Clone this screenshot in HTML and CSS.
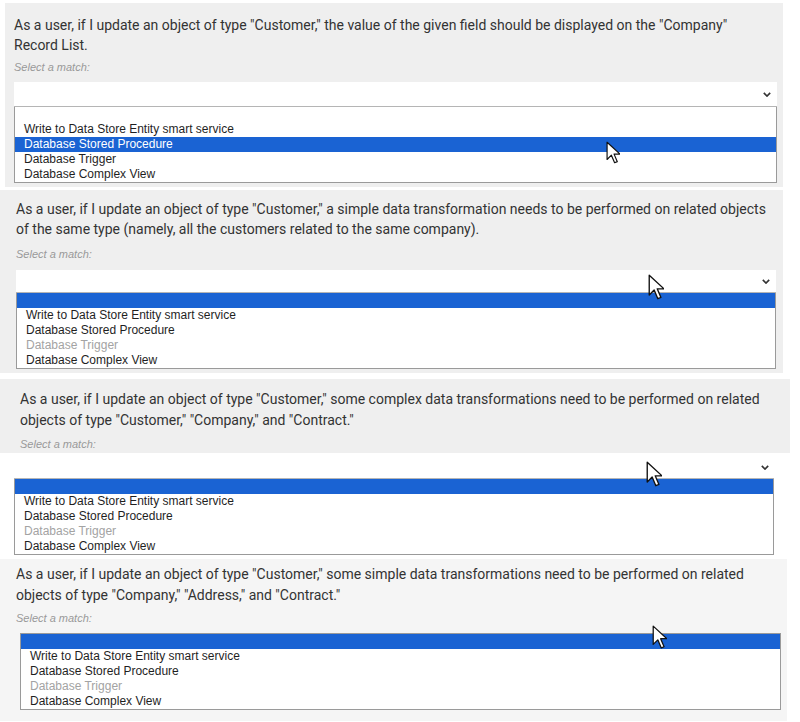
FILE: index.html
```html
<!DOCTYPE html>
<html lang="en">
<head>
<meta charset="utf-8">
<title>Select a match</title>
<link rel="stylesheet" href="styles.css">
</head>
<body>
<main class="page">

  <section class="shot shot-1">
    <p class="q">As a user, if I update an object of type "Customer," the value of the given field should be displayed on the "Company"<br>Record List.</p>
    <p class="hint">Select a match:</p>
    <div class="field">
      <div class="select-box"><svg class="chev" viewBox="0 0 10 6" width="8" height="5"><path d="M1 1l4 4 4-4" fill="none" stroke="#333" stroke-width="2"/></svg></div>
      <ul class="opts">
        <li></li>
        <li>Write to Data Store Entity smart service</li>
        <li class="sel">Database Stored Procedure</li>
        <li>Database Trigger</li>
        <li>Database Complex View</li>
      </ul>
    </div>
    <svg class="cursor cursor-1" viewBox="0 0 13 21" width="14" height="23"><path d="M1 1v16l4-4 3 7 2.5-1-3-7h5.5z" fill="#fff" stroke="#111" stroke-width="1.1" stroke-linejoin="round"/></svg>
  </section>

  <section class="shot shot-2">
    <p class="q">As a user, if I update an object of type "Customer," a simple data transformation needs to be performed on related objects<br>of the same type (namely, all the customers related to the same company).</p>
    <p class="hint">Select a match:</p>
    <div class="field">
      <div class="select-box"><svg class="chev" viewBox="0 0 10 6" width="8" height="5"><path d="M1 1l4 4 4-4" fill="none" stroke="#333" stroke-width="2"/></svg></div>
      <ul class="opts">
        <li class="sel"></li>
        <li>Write to Data Store Entity smart service</li>
        <li>Database Stored Procedure</li>
        <li class="off">Database Trigger</li>
        <li>Database Complex View</li>
      </ul>
    </div>
    <svg class="cursor cursor-2" viewBox="0 0 13 21" width="16" height="26"><path d="M1 1v16l4-4 3 7 2.5-1-3-7h5.5z" fill="#fff" stroke="#111" stroke-width="1.1" stroke-linejoin="round"/></svg>
  </section>

  <section class="shot shot-3">
    <div class="head">
      <p class="q">As a user, if I update an object of type "Customer," some complex data transformations need to be performed on related<br>objects of type "Customer," "Company," and "Contract."</p>
      <p class="hint">Select a match:</p>
    </div>
    <div class="field">
      <div class="select-box"><svg class="chev" viewBox="0 0 10 6" width="8" height="5"><path d="M1 1l4 4 4-4" fill="none" stroke="#333" stroke-width="2"/></svg></div>
      <ul class="opts">
        <li class="sel"></li>
        <li>Write to Data Store Entity smart service</li>
        <li>Database Stored Procedure</li>
        <li class="off">Database Trigger</li>
        <li>Database Complex View</li>
      </ul>
    </div>
    <svg class="cursor cursor-3" viewBox="0 0 13 21" width="16" height="26"><path d="M1 1v16l4-4 3 7 2.5-1-3-7h5.5z" fill="#fff" stroke="#111" stroke-width="1.1" stroke-linejoin="round"/></svg>
  </section>

  <section class="shot shot-4">
    <p class="q">As a user, if I update an object of type "Customer," some simple data transformations need to be performed on related<br>objects of type "Company," "Address," and "Contract."</p>
    <p class="hint">Select a match:</p>
    <div class="field">
      <ul class="opts">
        <li class="sel"></li>
        <li>Write to Data Store Entity smart service</li>
        <li>Database Stored Procedure</li>
        <li class="off">Database Trigger</li>
        <li>Database Complex View</li>
      </ul>
    </div>
    <svg class="cursor cursor-4" viewBox="0 0 13 21" width="15" height="24"><path d="M1 1v16l4-4 3 7 2.5-1-3-7h5.5z" fill="#fff" stroke="#111" stroke-width="1.1" stroke-linejoin="round"/></svg>
  </section>

</main>
</body>
</html>
```

FILE: styles.css
```css
* { box-sizing: border-box; }

html, body {
  margin: 0;
  padding: 0;
  background: #ffffff;
}

.page {
  display: flex;
  flex-direction: column;
  width: 800px;
}

.shot {
  position: relative;
  background: #efefef;
}

.q {
  margin: 0;
  font-family: Roboto, "Liberation Sans", sans-serif;
  font-size: 14px;
  line-height: 20px;
  color: #333333;
  white-space: nowrap;
}

.hint {
  margin: 0;
  font-family: "Liberation Sans", Arial, sans-serif;
  font-style: italic;
  font-size: 11px;
  line-height: 16px;
  color: #999999;
}

.field {
  display: flex;
  flex-direction: column;
}

.select-box {
  position: relative;
  display: flex;
  align-items: center;
  justify-content: flex-end;
  background: #ffffff;
  border-bottom: 1px solid #b5b5b5;
  padding-right: 6px;
}

.opts {
  list-style: none;
  margin: 0;
  padding: 0;
  background: #ffffff;
  border: 1px solid #9a9a9a;
  border-top: none;
  font-family: "Liberation Sans", Arial, sans-serif;
  font-size: 12px;
  color: #1f1f1f;
}

.opts li {
  height: 15px;
  line-height: 15px;
  padding-left: 9px;
  white-space: nowrap;
}

.opts li.sel {
  background: #1a63d3;
  color: #ffffff;
}

.opts li.off {
  color: #a3a3a3;
}

.cursor {
  position: absolute;
  display: block;
}

/* ---------- shot 1 ---------- */
.shot-1 {
  margin: 3px 17px 0 5px;
  padding: 12px 6px 4px 9px;
}
.shot-1 .hint { margin-top: 4px; }
.shot-1 .field { margin-top: 7px; }
.shot-1 .select-box { height: 25px; }
.shot-1 .cursor-1 { left: 601px; top: 138px; }

/* ---------- shot 2 ---------- */
.shot-2 {
  margin: 3px 17px 0 0;
  padding: 9px 7px 4px 16px;
}
.shot-2 .hint { margin-top: 7px; }
.shot-2 .field { margin-top: 8px; }
.shot-2 .select-box { height: 23px; }
.shot-2 .cursor-2 { left: 648px; top: 84px; }

/* ---------- shot 3 ---------- */
.shot-3 {
  margin-top: 6px;
  background: #ffffff;
}
.shot-3 .head {
  width: 790px;
  background: #efefef;
  padding: 10px 0 1px 20px;
}
.shot-3 .q { line-height: 21px; }
.shot-3 .hint { margin-top: 5px; }
.shot-3 .field {
  margin: 3px 26px 0 14px;
}
.shot-3 .select-box { height: 23px; background: #ffffff; padding-right: 5px; }
.shot-3 .cursor-3 { left: 646px; top: 82px; }

/* ---------- shot 4 ---------- */
.shot-4 {
  margin: 4px 13px 0 0;
  padding: 5px 6px 11px 16px;
  background: #f5f5f5;
}
.shot-4 .q { line-height: 21px; }
.shot-4 .hint { margin-top: 4px; }
.shot-4 .field {
  margin: 7px 0 0 4px;
}
.shot-4 .opts { border-top: 1px solid #9a9a9a; }
.shot-4 .cursor-4 { left: 652px; top: 66px; }
```
